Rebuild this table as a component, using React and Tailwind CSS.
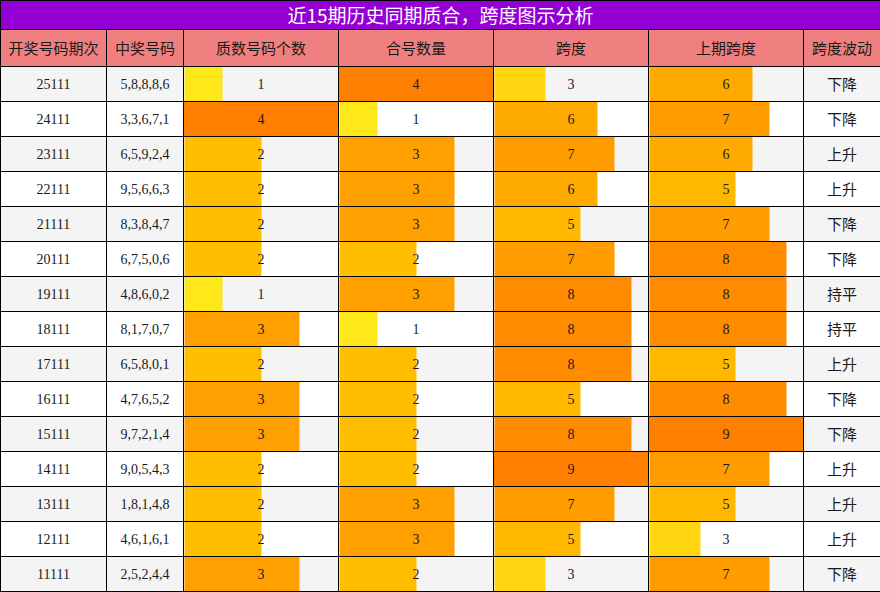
import React from "react";

const rows = [
  ["25111", "5,8,8,8,6", 1, 4, 3, 6, "下降"],
  ["24111", "3,3,6,7,1", 4, 1, 6, 7, "下降"],
  ["23111", "6,5,9,2,4", 2, 3, 7, 6, "上升"],
  ["22111", "9,5,6,6,3", 2, 3, 6, 5, "上升"],
  ["21111", "8,3,8,4,7", 2, 3, 5, 7, "下降"],
  ["20111", "6,7,5,0,6", 2, 2, 7, 8, "下降"],
  ["19111", "4,8,6,0,2", 1, 3, 8, 8, "持平"],
  ["18111", "8,1,7,0,7", 3, 1, 8, 8, "持平"],
  ["17111", "6,5,8,0,1", 2, 2, 8, 5, "上升"],
  ["16111", "4,7,6,5,2", 3, 2, 5, 8, "下降"],
  ["15111", "9,7,2,1,4", 3, 2, 8, 9, "下降"],
  ["14111", "9,0,5,4,3", 2, 2, 9, 7, "上升"],
  ["13111", "1,8,1,4,8", 2, 3, 7, 5, "上升"],
  ["12111", "4,6,1,6,1", 2, 3, 5, 3, "上升"],
  ["11111", "2,5,2,4,4", 3, 2, 3, 7, "下降"],
];

// colour ramp for counts (max 4) and spans (max 9)
const countColors = { 0: "#FFF200", 1: "#FFE81A", 2: "#FFBE00", 3: "#FFA000", 4: "#FF8000" };
const spanColors = {
  0: "#FFF200", 1: "#FFEA10", 2: "#FFE010", 3: "#FFD60F", 4: "#FFC400",
  5: "#FFB700", 6: "#FFAA00", 7: "#FF9C00", 8: "#FF8C00", 9: "#FF7F00",
};

function BarCell({ value, max, colors, bg }) {
  const pct = (value / max) * 100;
  const c = colors[value];
  return (
    <td
      className="border border-black text-center p-0"
      style={{ background: `linear-gradient(to right, ${c} 0%, ${c} ${pct}%, ${bg} ${pct}%, ${bg} 100%)` }}
    >
      {value}
    </td>
  );
}

export default function App() {
  const headers = ["开奖号码期次", "中奖号码", "质数号码个数", "合号数量", "跨度", "上期跨度", "跨度波动"];
  return (
    <div className="w-[880px] h-[592px] overflow-hidden bg-white">
      <table
        className="w-[880px] border-collapse table-fixed text-[14px] text-[#1a1a1a]"
        style={{ fontFamily: '"Liberation Serif", "Noto Sans CJK SC", serif' }}
      >
        <colgroup>
          <col className="w-[106px]" />
          <col className="w-[77px]" />
          <col className="w-[155px]" />
          <col className="w-[155px]" />
          <col className="w-[155px]" />
          <col className="w-[155px]" />
          <col className="w-[77px]" />
        </colgroup>
        <thead>
          <tr className="h-[29px]">
            <th
              colSpan={7}
              className="border border-black bg-[#9400D3] text-white text-[19px] font-normal p-0 leading-[26px]"
              style={{ fontFamily: '"Noto Sans CJK SC", sans-serif' }}
            >
              近15期历史同期质合，跨度图示分析
            </th>
          </tr>
          <tr className="h-[37px]">
            {headers.map((h) => (
              <th
                key={h}
                className="border border-black bg-[#F08080] text-[15px] font-normal p-0 text-[#1a1a1a]"
                style={{ fontFamily: '"Noto Sans CJK SC", sans-serif' }}
              >
                {h}
              </th>
            ))}
          </tr>
        </thead>
        <tbody>
          {rows.map((r, i) => {
            const bg = i % 2 === 0 ? "#F4F4F4" : "#FFFFFF";
            return (
              <tr key={r[0]} className={i % 2 === 0 ? "h-[35px] bg-[#F4F4F4]" : "h-[35px] bg-white"}>
                <td className="border border-black text-center p-0">{r[0]}</td>
                <td className="border border-black text-center p-0">{r[1]}</td>
                <BarCell value={r[2]} max={4} colors={countColors} bg={bg} />
                <BarCell value={r[3]} max={4} colors={countColors} bg={bg} />
                <BarCell value={r[4]} max={9} colors={spanColors} bg={bg} />
                <BarCell value={r[5]} max={9} colors={spanColors} bg={bg} />
                <td
                  className="border border-black text-center p-0 text-[15px]"
                  style={{ fontFamily: '"Noto Sans CJK SC", sans-serif' }}
                >
                  {r[6]}
                </td>
              </tr>
            );
          })}
        </tbody>
      </table>
    </div>
  );
}
